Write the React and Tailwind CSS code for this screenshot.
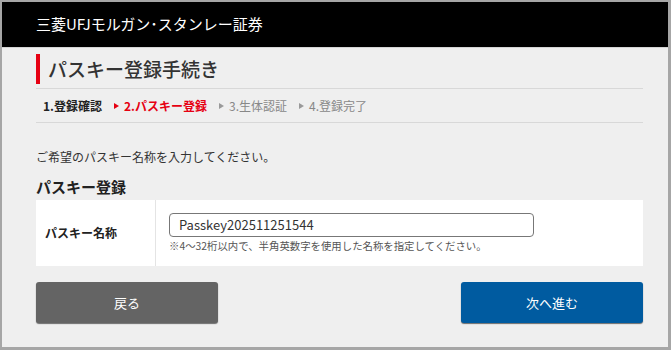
const font = { fontFamily: '"Noto Sans CJK JP", "Noto Sans", sans-serif' }

const steps = [
  { label: "1.登録確認", state: "done" },
  { label: "2.パスキー登録", state: "current" },
  { label: "3.生体認証", state: "todo" },
  { label: "4.登録完了", state: "todo" },
]

const Step = ({ step, first }) => {
  const color =
    step.state === "done"
      ? "font-bold text-[#222]"
      : step.state === "current"
        ? "font-bold text-[#e60012]"
        : "text-[#888]"
  const arrow = step.state === "current" ? "border-l-[#e60012]" : "border-l-[#999]"
  return (
    <div className={`flex items-center ${first ? "" : "ml-[12px]"}`}>
      {!first && (
        <span className={`mr-[5px] inline-block h-0 w-0 border-y-[3px] border-l-[5px] border-y-transparent ${arrow}`} />
      )}
      <span className={`text-[12px] ${color}`}>{step.label}</span>
    </div>
  )
}

const App = () => {
  return (
    <div
      className="flex h-[350px] w-[671px] flex-col overflow-hidden border-t-2 border-r-[3px] border-b-[3px] border-l-2 border-[#a6a6a6] bg-[#efefef]"
      style={font}
    >
      <div className="flex h-[46px] shrink-0 items-center border-b border-[#d4d4d4] bg-black pl-[34px]">
        <span className="text-[15px] text-white">三菱UFJモルガン･スタンレー証券</span>
      </div>

      <div className="flex flex-col pr-[25px] pl-[34px]">
        <div className="mt-[6px] border-b border-[#d8d8d8] pb-[4px]">
          <div className="flex h-[30px] items-center border-l-4 border-[#e60012] pl-[8px]">
            <h1 className="text-[19px] leading-[30px] font-medium text-[#333]">パスキー登録手続き</h1>
          </div>
        </div>

        <div className="flex h-[34px] items-center border-b border-[#d8d8d8] pl-[7px]">
          {steps.map((s, i) => (
            <Step key={s.label} step={s} first={i === 0} />
          ))}
        </div>

        <p className="mt-[25px] text-[12px] leading-[18px] text-[#333]">ご希望のパスキー名称を入力してください。</p>

        <h2 className="mt-[11px] text-[15px] leading-[20px] font-bold text-[#222]">パスキー登録</h2>

        <div className="mt-[3px] flex h-[66px] bg-white">
          <div className="flex w-[120px] items-center border-r border-[#e4e4e4] pl-[9px]">
            <span className="text-[12px] font-bold text-[#222]">パスキー名称</span>
          </div>
          <div className="flex flex-col pt-[13px] pl-[13px]">
            <div className="flex h-[24px] w-[365px] items-center rounded-[4px] border border-[#777] bg-white pl-[9px]">
              <span className="text-[13px] text-[#333]">Passkey202511251544</span>
            </div>
            <p className="mt-[2px] text-[10.4px] leading-[14px] text-[#555]">
              ※4～32桁以内で、半角英数字を使用した名称を指定してください。
            </p>
          </div>
        </div>

        <div className="mt-[16px] flex justify-between">
          <button className="flex h-[41px] w-[182px] items-center justify-center rounded-[3px] bg-[#646464] text-[13px] text-white shadow-[0_1px_1px_rgba(0,0,0,0.55)]">
            戻る
          </button>
          <button className="flex h-[41px] w-[182px] items-center justify-center rounded-[3px] bg-[#005ba0] text-[13px] text-white shadow-[0_1px_1px_rgba(0,0,0,0.55)]">
            次へ進む
          </button>
        </div>
      </div>
    </div>
  )
}

export default App
